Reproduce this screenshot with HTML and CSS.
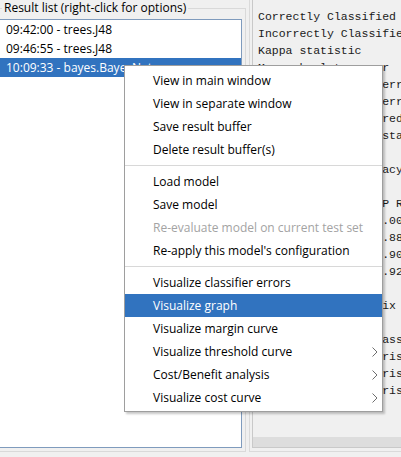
FILE: index.html
```html
<!DOCTYPE html>
<html>
<head>
<meta charset="utf-8">
<link rel="stylesheet" href="styles.css">
</head>
<body>
<div class="app">
  <fieldset class="group">
    <legend class="legend">Result list (right-click for options)</legend>
    <ul class="list">
      <li class="row">09:42:00 - trees.J48</li>
      <li class="row">09:46:55 - trees.J48</li>
      <li class="row selected">10:09:33 - bayes.BayesNet</li>
    </ul>
  </fieldset>
  <div class="output">
    <div class="scrollpane">
<pre class="text">Correctly Classified Instances         139               92.6667 %
Incorrectly Classified Instances        11                7.3333 %
Kappa statistic                          0.89  
Mean absolute error                      0.0592
Root mean squared error                  0.1968
Relative absolute error                 13.3293 %
Root relative squared error             41.7373 %
Total Number of Instances              150     

=== Detailed Accuracy By Class ===

                 TP Rate  FP Rate  Precision  Recall   F-Measure  MCC      ROC Area  PRC Area  Class
                 1.000    0.000    1.000      1.000    1.000      1.000    1.000     1.000     Iris-setosa
                 0.880    0.050    0.898      0.880    0.889      0.834    0.975     0.951     Iris-versicolor
                 0.900    0.060    0.882      0.900    0.891      0.836    0.976     0.953     Iris-virginica
Weighted Avg.    0.927    0.037    0.927      0.927    0.927      0.890    0.984     0.968     

=== Confusion Matrix ===

  a  b  c   &lt;-- classified as
 50  0  0 |  a = Iris-setosa
  0 44  6 |  b = Iris-versicolor
  0  5 45 |  c = Iris-virginica
</pre>
      <div class="hscroll"></div>
    </div>
  </div>

  <div class="menu">
    <div class="item">View in main window</div>
    <div class="item">View in separate window</div>
    <div class="item">Save result buffer</div>
    <div class="item">Delete result buffer(s)</div>
    <div class="sep"></div>
    <div class="item">Load model</div>
    <div class="item">Save model</div>
    <div class="item disabled">Re-evaluate model on current test set</div>
    <div class="item">Re-apply this model's configuration</div>
    <div class="sep"></div>
    <div class="item">Visualize classifier errors</div>
    <div class="item active">Visualize graph</div>
    <div class="item">Visualize margin curve</div>
    <div class="item sub">Visualize threshold curve<svg class="arrow" width="6" height="10" viewBox="0 0 6 10"><polyline points="0.5,0.5 5,5 0.5,9.5" fill="none" stroke="#6e6e6e" stroke-width="1"/></svg></div>
    <div class="item sub">Cost/Benefit analysis<svg class="arrow" width="6" height="10" viewBox="0 0 6 10"><polyline points="0.5,0.5 5,5 0.5,9.5" fill="none" stroke="#6e6e6e" stroke-width="1"/></svg></div>
    <div class="item sub">Visualize cost curve<svg class="arrow" width="6" height="10" viewBox="0 0 6 10"><polyline points="0.5,0.5 5,5 0.5,9.5" fill="none" stroke="#6e6e6e" stroke-width="1"/></svg></div>
  </div>
</div>
</body>
</html>
```

FILE: styles.css
```css
html, body {
  margin: 0;
  padding: 0;
  background: #f0f0f0;
}

body {
  font-family: "Open Sans", "Noto Sans", sans-serif;
  font-size: 12px;
  color: #000;
}

.app {
  position: relative;
  display: flex;
  width: 401px;
  height: 457px;
  overflow: hidden;
}

.group {
  flex: none;
  box-sizing: border-box;
  width: 250px;
  height: 452px;
  margin: 0 0 0 -4px;
  padding: 3px 3px 3px 0;
  border: 1px solid #d9d9d9;
  display: flex;
  flex-direction: column;
  min-inline-size: 0;
}

.legend {
  margin-left: 5px;
  padding: 0 2px;
  line-height: 16px;
  font-size: 12px;
  color: #000;
}

.list {
  flex: 1;
  margin: 0;
  padding: 0;
  list-style: none;
  background: #fff;
  border: 1px solid #7f9bbd;
}

.row {
  height: 19px;
  line-height: 19px;
  padding-left: 8px;
  white-space: nowrap;
}

.row.selected {
  background: #3173bf;
  color: #fff;
}

.output {
  flex: none;
  box-sizing: border-box;
  width: 170px;
  height: 452px;
  margin-left: 3px;
  padding: 0 0 3px 2px;
  border-left: 1px solid #dadada;
  border-bottom: 1px solid #dadada;
  display: flex;
}

.scrollpane {
  flex: 1;
  display: flex;
  flex-direction: column;
  border-left: 1px solid #c9c9c9;
  border-bottom: 1px solid #c9c9c9;
  background: #f0f0f0;
  overflow: hidden;
}

.text {
  flex: 1;
  margin: 0;
  padding: 8px 0 0 5px;
  font-family: "Liberation Mono", monospace;
  font-size: 11.5px;
  line-height: 17px;
  color: #1a1a1a;
  overflow: hidden;
}

.hscroll {
  flex: none;
  height: 10px;
  background: #dddddd;
}

.menu {
  position: absolute;
  left: 124px;
  top: 65px;
  box-sizing: border-box;
  width: 259px;
  padding: 3px 0 2px;
  background: #fff;
  border: 1px solid #9e9e9e;
  box-shadow: 2px 2px 2px rgba(0, 0, 0, 0.22);
}

.item {
  display: flex;
  align-items: center;
  justify-content: space-between;
  height: 23px;
  padding: 0 4px 0 28px;
  white-space: nowrap;
  color: #000;
}

.item.disabled {
  color: #a3a3a3;
}

.item.active {
  background: #3173bf;
  color: #fff;
}

.arrow {
  flex: none;
}

.sep {
  height: 1px;
  margin: 4px 0;
  background: #d8d8d8;
}
```
